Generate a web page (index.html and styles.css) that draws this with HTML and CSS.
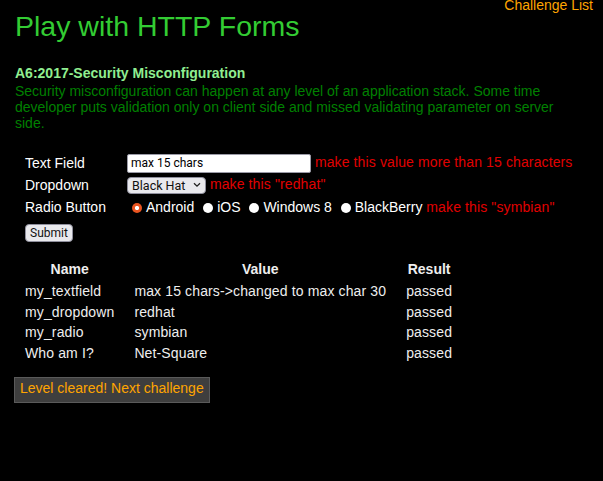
FILE: index.html
```html
<!DOCTYPE html>
<html>
<head>
<meta charset="utf-8">
<title>Play with HTTP Forms</title>
<link rel="stylesheet" href="styles.css">
</head>
<body>
<div class="page">
  <div class="topbar"><a class="challenges" href="#">Challenge List</a></div>
  <h1 class="title">Play with HTTP Forms</h1>
  <h3 class="vuln">A6:2017-Security Misconfiguration</h3>
  <p class="desc">Security misconfiguration can happen at any level of an application stack. Some time developer puts validation only on client side and missed validating parameter on server side.</p>
  <form class="form">
    <div class="form-grid">
      <div class="label">Text Field</div>
      <div class="field"><input class="text" type="text" value="max 15 chars" maxlength="15"> <span class="hint">make this value more than 15 characters</span></div>
      <div class="label">Dropdown</div>
      <div class="field"><select class="drop"><option>Black Hat</option><option>redhat</option></select> <span class="hint">make this "redhat"</span></div>
      <div class="label">Radio Button</div>
      <div class="field"><input class="radio" type="radio" name="r" checked>Android <input class="radio" type="radio" name="r">iOS <input class="radio" type="radio" name="r">Windows 8 <input class="radio" type="radio" name="r">BlackBerry <span class="hint">make this "symbian"</span></div>
    </div>
    <button class="submit" type="button">Submit</button>
  </form>
  <table class="results">
    <thead>
      <tr><th>Name</th><th>Value</th><th>Result</th></tr>
    </thead>
    <tbody>
      <tr><td>my_textfield</td><td>max 15 chars-&gt;changed to max char 30</td><td>passed</td></tr>
      <tr><td>my_dropdown</td><td>redhat</td><td>passed</td></tr>
      <tr><td>my_radio</td><td>symbian</td><td>passed</td></tr>
      <tr><td>Who am I?</td><td>Net-Square</td><td>passed</td></tr>
    </tbody>
  </table>
  <div class="next-wrap"><a class="next" href="#">Level cleared! Next challenge</a></div>
</div>
</body>
</html>
```
FILE: styles.css
```css
html, body {
  margin: 0;
  padding: 0;
  background: #000;
}
body {
  font-family: "Liberation Sans", Arial, sans-serif;
  font-size: 14px;
  color: #fff;
}
.page {
  padding: 0 20px 0 15px;
}
.topbar {
  display: flex;
  justify-content: flex-end;
  margin-right: -10px;
  line-height: 10px;
  height: 10px;
}
.challenges {
  color: #ffa500;
  text-decoration: none;
  font-size: 14px;
}
.title {
  margin: 0;
  font-size: 28.5px;
  font-weight: normal;
  line-height: 32px;
  color: #33cc33;
}
.vuln {
  margin: 21px 0 0;
  font-size: 14px;
  line-height: 20px;
  color: #90ee90;
}
.desc {
  margin: 0;
  line-height: 16px;
  color: #008000;
}
.form {
  margin: 21px 0 0;
  padding-left: 10px;
}
.form-grid {
  display: grid;
  grid-template-columns: 102px auto;
  grid-auto-rows: 22px;
  align-items: center;
}
.label {
  line-height: 16px;
}
.field {
  line-height: 16px;
  white-space: nowrap;
}
.text {
  font-family: Roboto, "Liberation Sans", sans-serif;
  font-size: 12px;
  color: #000;
  width: 184px;
  height: 19px;
  box-sizing: border-box;
  padding: 0 3px;
  border: 1px solid #9a9aa6;
  border-radius: 2px;
  background: #fff;
  vertical-align: middle;
}
.drop {
  -webkit-appearance: none;
  appearance: none;
  font-family: Roboto, "Liberation Sans", sans-serif;
  font-size: 12.5px;
  color: #111;
  width: 79px;
  height: 17px;
  box-sizing: border-box;
  padding: 0 0 0 4px;
  border: 1px solid #8f8f9d;
  border-radius: 4px;
  background: #e9e9ed url("data:image/svg+xml,%3Csvg xmlns='http://www.w3.org/2000/svg' width='8' height='6' viewBox='0 0 8 6'%3E%3Cpath d='M1 1.2 L4 4.2 L7 1.2' fill='none' stroke='%23222' stroke-width='1.3'/%3E%3C/svg%3E") no-repeat right 4px center;
  vertical-align: middle;
  line-height: 15px;
}
.radio {
  -webkit-appearance: none;
  appearance: none;
  width: 10px;
  height: 10px;
  margin: 0 4px 0 5px;
  border-radius: 50%;
  background: #fff;
  border: none;
  vertical-align: -1px;
}
.radio:checked {
  background: radial-gradient(circle, #fff 0 1.8px, #e95420 2.4px);
}
.hint {
  color: #e00000;
  letter-spacing: 0.12px;
}
.submit {
  display: block;
  margin-top: 6px;
  font-family: Roboto, "Liberation Sans", sans-serif;
  font-size: 12px;
  color: #111;
  height: 18px;
  line-height: 16px;
  padding: 0 4px;
  border: 1px solid #8f8f9d;
  border-radius: 4px;
  background: #e9e9ed;
}
.results {
  margin-top: 16.5px;
  border-collapse: collapse;
}
.results th, .results td {
  padding: 2px 10px;
  line-height: 16.5px;
  color: #eee;
  letter-spacing: 0.13px;
}
.results th {
  text-align: center;
  font-weight: bold;
  letter-spacing: 0;
  padding-bottom: 4px;
}
.results td {
  text-align: left;
}
.next-wrap {
  display: flex;
  margin-top: 13.5px;
  margin-left: -1px;
}
.next {
  display: block;
  background: #3e3e3e;
  border: 1px solid #5a5a5a;
  color: #ffa500;
  text-decoration: none;
  font-size: 14px;
  line-height: 16px;
  padding: 2px 5px 6px 5px;
}
```
